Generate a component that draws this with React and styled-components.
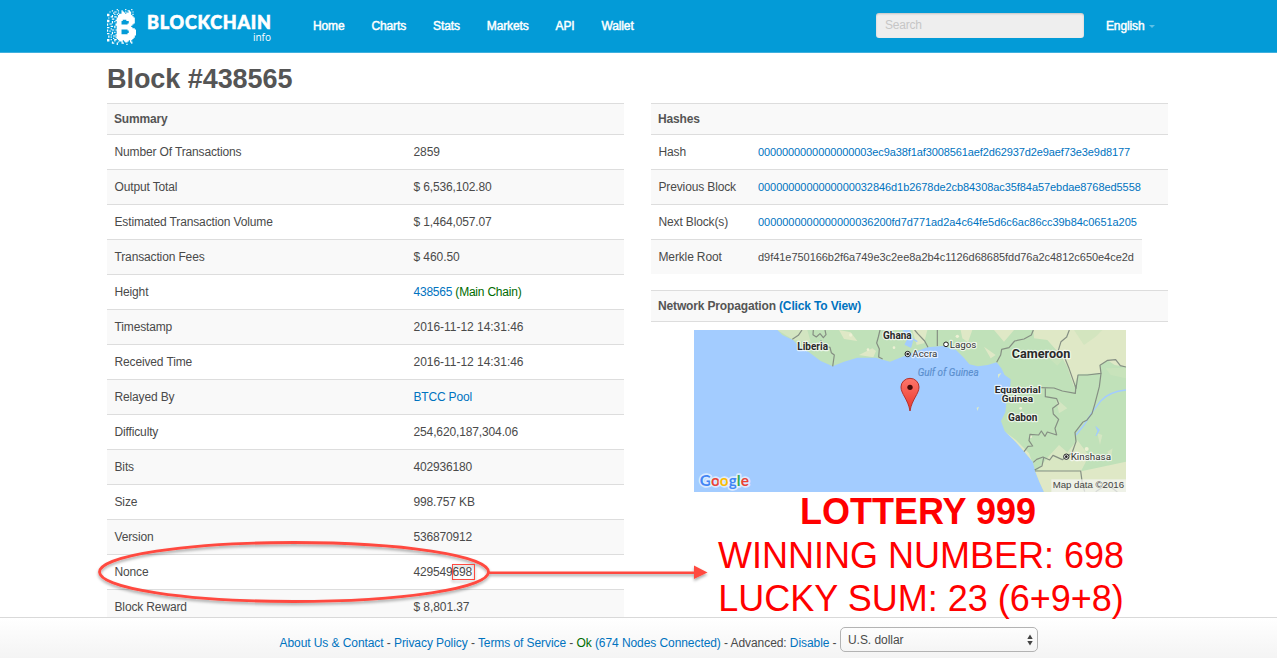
import React from "react";
import styled, { createGlobalStyle } from "styled-components";

const Global = createGlobalStyle`
  *, *::before, *::after { box-sizing: border-box; }
  html, body { margin: 0; padding: 0; }
  body {
    background: #fff;
    color: #4a4a4a;
    font: 12px/18px "Liberation Sans", Arial, sans-serif;
    overflow: hidden;
  }
`;

const Page = styled.div`
  position: relative;
  display: flex;
  flex-direction: column;
  height: 658px;
  overflow: hidden;
`;

const Header = styled.header`
  flex: none;
  height: 53px;
  padding-left: 107px;
  display: flex;
  align-items: flex-start;
  background: #039bd7;
  border-bottom: 1px solid #3fb0de;
`;

const Brand = styled.div`
  display: flex;
  width: 206px;
  padding-top: 9px;
`;

const Mark = styled.svg`
  display: block;
  width: 29px;
  height: 36px;
`;

const Wordmark = styled.div`
  width: 135px;
  padding-top: 4px;
  text-align: right;
  color: #fff;
  font-family: Lato, sans-serif;
`;

const WordTop = styled.div`
  font-size: 18px;
  line-height: 18px;
  font-weight: 900;
  letter-spacing: 0.75px;
  margin-right: -0.7px;
  -webkit-text-stroke: 0.6px #fff;
`;

const WordSub = styled.div`
  font-family: "Open Sans", sans-serif;
  font-size: 10px;
  font-weight: 400;
  line-height: 12px;
`;

const Nav = styled.nav`
  display: flex;
  gap: 27px;
  width: 563px;
  padding-top: 17px;
`;

const NavLink = styled.a`
  color: #fff;
  -webkit-text-stroke: 0.45px #fff;
  letter-spacing: -0.13px;
`;

const Search = styled.div`
  width: 208px;
  height: 25px;
  margin-top: 13px;
  padding: 3px 9px;
  border-radius: 3px;
  background: #eee;
  box-shadow: inset 0 1px 2px rgba(0, 0, 0, 0.18);
  color: #c6c6c6;
  letter-spacing: -0.2px;
`;

const Language = styled.div`
  display: flex;
  align-items: center;
  gap: 5px;
  padding: 17px 0 0 22px;
`;

const Caret = styled.span`
  border: 3px solid transparent;
  border-top-color: #5fc0e6;
  border-bottom: 0;
`;

const Title = styled.h1`
  margin: 0;
  padding: 9px 0 0 107px;
  height: 50px;
  font-size: 27px;
  line-height: 34px;
  color: #555;
  letter-spacing: -0.05px;
`;

const Columns = styled.main`
  display: flex;
  gap: 27px;
  padding-left: 107px;
`;

const Column = styled.section`
  width: 517px;
`;

const Heading = styled.h2`
  margin: 0;
  height: ${(p) => (p.$closed ? 32 : 31)}px;
  padding: 6px 7px 0;
  font-size: 12px;
  line-height: 18px;
  background: #f9f9f9;
  border-top: 1px solid #ddd;
  border-bottom: ${(p) => (p.$closed ? "1px solid #ddd" : "0")};
  margin-top: ${(p) => (p.$closed ? 16 : 0)}px;
  color: #555;
  letter-spacing: -0.15px;
`;

const Row = styled.div`
  display: flex;
  width: ${(p) => p.$width || 517}px;
  height: 35px;
  padding: 8px 0 0 7.5px;
  border-top: 1px solid #ddd;
  background: ${(p) => (p.$shade ? "#f9f9f9" : "#fff")};
`;

const Label = styled.div`
  width: ${(p) => p.$width}px;
  letter-spacing: -0.14px;
`;

const Value = styled.div`
  white-space: nowrap;
  letter-spacing: ${(p) => p.$tracking}px;
`;

const Link = styled.a`
  color: #0073bf;
`;

const Green = styled.span`
  color: #006b00;
`;

const Hash = styled.div`
  font-size: 11px;
  letter-spacing: ${(p) => p.$tracking}px;
  color: ${(p) => (p.$link ? "#0073bf" : "#4a4a4a")};
  white-space: nowrap;
`;

const MapArt = styled.svg`
  display: block;
  width: 432px;
  height: 162px;
  margin: 8px 0 0 43px;
`;

const Result = styled.div`
  position: relative;
  z-index: 2;
  padding-left: 23px;
  margin-top: -2px;
  text-align: center;
  color: #f00;
  font-size: 36px;
  line-height: 43.5px;
  white-space: nowrap;
`;

const ResultTitle = styled.div`
  font-weight: 700;
  padding-right: 6px;
`;

const Footer = styled.footer`
  position: absolute;
  left: 0;
  right: 0;
  bottom: 0;
  height: 41px;
  display: flex;
  gap: 4px;
  padding: 9px 0 0 279.5px;
  border-top: 1px solid #d9d9d9;
  background: linear-gradient(#fff, #f4f4f4);
`;

const FooterLinks = styled.div`
  padding-top: 7px;
  width: 556.5px;
  white-space: nowrap;
  letter-spacing: -0.075px;
`;

const Select = styled.div`
  display: flex;
  justify-content: space-between;
  align-items: center;
  width: 198px;
  height: 25px;
  padding: 0 4px 0 7px;
  border: 1px solid #b3b3b3;
  border-radius: 5px;
  background: linear-gradient(#fdfdfd, #f5f5f5);
  letter-spacing: -0.05px;
`;

const Annotation = styled.svg`
  position: absolute;
  left: 0;
  top: 0;
  z-index: 3;
  pointer-events: none;
`;

const MOSAIC = [
  "........#......#....#...",
  "....#....#..#....##.....",
  "..#...##....##.#..##.#..",
  ".....#...#..###.####....",
  "##....#.#.##########.#..",
  "##..#....############...",
  "...##.##.#############..",
  ".#......###############.",
  "....##..###############.",
  "##.....######...#######.",
  "##..#.#.####......#####.",
  "....#...####......#####.",
  "#.##...#####.....#####..",
  "#......##############...",
  "...##.#.############....",
  "##....#.#############...",
  "...#....###############.",
  "#...##.#####.....#######",
  "#.#.....####......######",
  "....#.#.####......######",
  "##..#...####.....#######",
  "...#...#################",
  ".#...##.###############.",
  ".#.#...################.",
  ".....#..##############..",
  "##.#..##.############...",
  "##....#...###.####.#....",
  "....#....#..#..##..##...",
  "....##..#...##......#...",
  "........#.......#.......",
];

const cells = MOSAIC.flatMap((line, y) =>
  [...line].map((c, x) => (c === "#" ? `M${x} ${y}h1.02v1.02h-1.02z` : "")).filter(Boolean)
).join("");

const summary = [
  ["Number Of Transactions", "2859"],
  ["Output Total", "$ 6,536,102.80", -0.14],
  ["Estimated Transaction Volume", "$ 1,464,057.07", -0.14],
  ["Transaction Fees", "$ 460.50"],
  ["Height", <><Link>438565</Link> <Green>(Main Chain)</Green></>, -0.22],
  ["Timestamp", "2016-11-12 14:31:46", -0.03],
  ["Received Time", "2016-11-12 14:31:46", -0.03],
  ["Relayed By", <Link>BTCC Pool</Link>, -0.18],
  ["Difficulty", "254,620,187,304.06", -0.13],
  ["Bits", "402936180", -0.18],
  ["Size", "998.757 KB", -0.14],
  ["Version", "536870912", -0.18],
  ["Nonce", "429549698", -0.18],
  ["Block Reward", "$ 8,801.37"],
];

const hashes = [
  { label: "Hash", value: "0000000000000000003ec9a38f1af3008561aef2d62937d2e9aef73e3e9d8177", link: true, tracking: -0.105 },
  { label: "Previous Block", value: "0000000000000000032846d1b2678de2cb84308ac35f84a57ebdae8768ed5558", link: true, tracking: -0.07 },
  { label: "Next Block(s)", value: "0000000000000000036200fd7d771ad2a4c64fe5d6c6ac86cc39b84c0651a205", link: true, tracking: -0.045 },
  { label: "Merkle Root", value: "d9f41e750166b2f6a749e3c2ee8a2b4c1126d68685fdd76a2c4812c650e4ce2d", width: 491, tracking: -0.04 },
];

const halo = { stroke: "#fff", strokeWidth: 7, strokeOpacity: 0.7, strokeLinejoin: "round", paintOrder: "stroke" };

function AfricaMap() {
  return (
    <MapArt viewBox="0 15 1296 486">
      <defs>
        <linearGradient id="pin" x1="0" y1="0" x2="0" y2="1">
          <stop offset="0" stopColor="#ff766a" />
          <stop offset="1" stopColor="#e8352b" />
        </linearGradient>
        <clipPath id="land">
          <path d="M250 15L265 30L298 46L318 68L345 82L380 108L416 124L450 110L490 98L545 98L588 110L618 98L660 82L700 67L746 63L786 75L811 100L826 118L851 124L881 120L908 112L922 130L932 150L950 163L948 198L936 208L930 225L937 235L934 262L921 288L932 318L966 352L991 380L1016 410L1024 440L1036 470L1050 501H1296V15Z" />
        </clipPath>
      </defs>
      <rect y="15" width="1296" height="486" fill="#a3ccff" />
      <g clipPath="url(#land)">
        <rect y="15" width="1296" height="486" fill="#c0e1b9" />
        <g fill="#dfe8c6">
          <path d="M1018 15H1296V125L1262 120L1241 106L1218 121L1221 145L1152 148L1140 185L1120 125L1100 90L1060 45L1020 40Z" />
          <path d="M1020 438H1165L1296 410V501H1040Z" />
          <path d="M1060 398L1095 360L1120 382L1150 345L1185 392L1160 440L1030 436Z" opacity=".8" />
          <path d="M926 315L966 345L1005 385L1015 412L990 384L945 345Z" />
          <path d="M250 15H340L350 50L300 46Z" opacity=".6" />
          <path d="M435 15L470 22L490 48L450 42ZM495 90L535 70L546 78L538 97ZM800 15H835L822 52L805 40Z" />
          <path d="M655 15H700L690 55L668 60ZM870 65L905 90L890 100ZM900 15H960L930 50Z" />
          <path d="M1210 325L1225 330L1218 360ZM1240 380L1256 370L1250 402ZM1085 220L1120 250L1095 265Z" opacity=".65" />
        </g>
        <path d="M1140 15L1170 60L1205 35L1225 15ZM1060 95L1105 105L1090 122ZM1235 130L1296 128V160L1250 150Z" fill="#cde3bc" opacity=".65" />
        <g fill="#edf0d4">
          <circle cx="470" cy="30" r="5" /><circle cx="522" cy="74" r="4" /><circle cx="390" cy="68" r="5" />
          <circle cx="600" cy="68" r="4" /><circle cx="845" cy="55" r="4" /><circle cx="790" cy="34" r="5" />
          <circle cx="980" cy="250" r="4" /><circle cx="1010" cy="335" r="4" /><circle cx="1178" cy="372" r="6" />
        </g>
        <path d="M628 15L642 42L634 58L650 66L655 48L646 15ZM653 40L670 50" fill="#a3ccff" stroke="#a3ccff" strokeWidth="4" />
        <path d="M1296 195Q1245 200 1220 228L1194 262L1170 300L1146 330" fill="none" stroke="#a3ccff" strokeWidth="4" />
        <path d="M1206 305L1216 315L1206 332L1212 318Z" fill="#a3ccff" stroke="#a3ccff" strokeWidth="3" />
      </g>
      <path d="M912 148L922 144L912 160ZM848 248L855 245L850 258Z" fill="#dcebc9" />
      <g fill="none" stroke="#858f83" strokeWidth="3.6" strokeLinejoin="round">
        <path d="M324 15L313 31L295 43M358 15L357 29L367 36L378 26L388 38L396 29L393 15M380 46L391 64L408 67L412 83L421 90L416 124" />
        <path d="M558 15L553 36L548 54L556 72L554 96L566 102M662 15L671 26L692 48L702 67M730 15V63" />
        <path d="M908 112L920 90L923 73L945 68L962 48L990 42L1012 30L1018 15M1126 15L1118 36L1101 50L1093 76L1112 98L1125 130L1146 190L1152 150L1180 150L1221 145L1218 121L1241 106L1265 104L1279 122L1296 126" />
        <path d="M1040 188L1080 189L1105 198L1144 205L1146 180M1054 190V215L1088 221L1094 236L1076 250L1078 267L1094 283L1083 310L1088 330L1060 321L1053 334L1042 318L1034 330L1008 328L1005 347L1016 363L1002 364L990 380M1221 145L1216 185L1203 235L1194 266L1178 286L1166 292L1143 322L1146 350L1134 384L1105 404L1077 391L1067 405L1047 396L1028 403L1018 412M1049 398L1044 423L1022 435M1023 438H1160L1165 475L1172 500M1205 500L1240 478L1270 501" />
      </g>
      <path d="M621 186A27 26 0 0 1 675 186C675 207 654 222 648 258C642 222 621 207 621 186Z" fill="url(#pin)" stroke="#b4322c" strokeWidth="3" />
      <circle cx="648" cy="187" r="8" fill="#4b0c0a" />
      <g fontFamily="Roboto, sans-serif" fontWeight="700" fill="#2a2a2a" {...halo}>
        <text x="310" y="74" fontSize="30" textLength="92" lengthAdjust="spacingAndGlyphs">Liberia</text>
        <text x="567" y="41" fontSize="30" textLength="86" lengthAdjust="spacingAndGlyphs">Ghana</text>
        <text x="953" y="98" fontSize="37" textLength="176" lengthAdjust="spacingAndGlyphs">Cameroon</text>
        <text x="902" y="205" fontSize="29" textLength="138" lengthAdjust="spacingAndGlyphs">Equatorial</text>
        <text x="923" y="232" fontSize="29" textLength="94" lengthAdjust="spacingAndGlyphs">Guinea</text>
        <text x="942" y="287" fontSize="30" textLength="88" lengthAdjust="spacingAndGlyphs">Gabon</text>
      </g>
      <g fontFamily="Roboto, sans-serif" fill="#333" {...halo}>
        <text x="655" y="95" fontSize="29" textLength="75" lengthAdjust="spacingAndGlyphs">Accra</text>
        <text x="767" y="68" fontSize="29" textLength="80" lengthAdjust="spacingAndGlyphs">Lagos</text>
        <text x="1130" y="405" fontSize="29" textLength="121" lengthAdjust="spacingAndGlyphs">Kinshasa</text>
      </g>
      <text x="671" y="154" fontSize="30" fontStyle="italic" fontFamily="Roboto, sans-serif" fill="#5b8fce" stroke="#5b8fce" strokeWidth=".5" textLength="183" lengthAdjust="spacingAndGlyphs">Gulf of Guinea</text>
      <g fill="#fff" stroke="#222" strokeWidth="3">
        <circle cx="641" cy="87" r="8" /><circle cx="756" cy="58" r="7" /><circle cx="1117" cy="395" r="8" />
      </g>
      <circle cx="641" cy="87" r="4" fill="#222" /><circle cx="1117" cy="395" r="4" fill="#222" />
      <rect x="1072" y="463" width="224" height="38" fill="#f5f5f5" opacity=".72" />
      <text x="1076" y="489" fontSize="29" fontFamily="Liberation Sans, sans-serif" fill="#444" textLength="214" lengthAdjust="spacingAndGlyphs">Map data ©2016</text>
      <text x="17" y="483" fontSize="46" fontFamily="Lato, sans-serif" fontWeight="700" textLength="148" lengthAdjust="spacingAndGlyphs" stroke="#fff" strokeWidth="10" strokeOpacity=".6" paintOrder="stroke" strokeLinejoin="round">
        <tspan fill="#4285f4">G</tspan><tspan fill="#ea4335">o</tspan><tspan fill="#fbbc05">o</tspan><tspan fill="#4285f4">g</tspan><tspan fill="#34a853">l</tspan><tspan fill="#ea4335">e</tspan>
      </text>
    </MapArt>
  );
}

export default function App() {
  return (
    <Page>
      <Global />
      <Header>
        <Brand>
          <Mark viewBox="0 0 24 30" preserveAspectRatio="none"><path d={cells} fill="#fff" /></Mark>
          <Wordmark>
            <WordTop>BLOCKCHAIN</WordTop>
            <WordSub>info</WordSub>
          </Wordmark>
        </Brand>
        <Nav>
          {["Home", "Charts", "Stats", "Markets", "API", "Wallet"].map((n) => <NavLink key={n}>{n}</NavLink>)}
        </Nav>
        <Search>Search</Search>
        <Language><NavLink>English</NavLink><Caret /></Language>
      </Header>
      <Title>Block #438565</Title>
      <Columns>
        <Column>
          <Heading>Summary</Heading>
          {summary.map(([label, value, tracking = -0.08], i) => (
            <Row key={label} $shade={i % 2 === 1}>
              <Label $width={299}>{label}</Label>
              <Value $tracking={tracking}>{value}</Value>
            </Row>
          ))}
        </Column>
        <Column>
          <Heading>Hashes</Heading>
          {hashes.map((h, i) => (
            <Row key={h.label} $shade={i % 2 === 1} $width={h.width}>
              <Label $width={99.5}>{h.label}</Label>
              <Hash $link={h.link} $tracking={h.tracking}>{h.value}</Hash>
            </Row>
          ))}
          <Heading $closed>Network Propagation <Link>(Click To View)</Link></Heading>
          <AfricaMap />
          <Result>
            <ResultTitle>LOTTERY 999</ResultTitle>
            <div>WINNING NUMBER: 698</div>
            <div>LUCKY SUM: 23 (6+9+8)</div>
          </Result>
        </Column>
      </Columns>
      <Footer>
        <FooterLinks>
          <Link>About Us &amp; Contact</Link> - <Link>Privacy Policy</Link> - <Link>Terms of Service</Link> - <Green>Ok</Green> <Link>(674 Nodes Connected)</Link> - Advanced: <Link>Disable</Link> -
        </FooterLinks>
        <Select>
          U.S. dollar
          <svg width="6" height="12" viewBox="0 0 6 12"><path d="M3 0.5L5.7 5H.3ZM3 11.5L.3 7H5.7Z" fill="#444" /></svg>
        </Select>
      </Footer>
      <Annotation width="1277" height="658">
        <defs>
          <filter id="soft" x="-5%" y="-20%" width="110%" height="150%">
            <feDropShadow dx="0" dy="2" stdDeviation="1.5" floodOpacity=".35" />
          </filter>
        </defs>
        <g fill="none" stroke="#ff4a3f" filter="url(#soft)">
          <ellipse cx="294" cy="572" rx="194.5" ry="29.5" strokeWidth="2.8" />
          <path d="M489 572.7H695" strokeWidth="2.6" />
          <path d="M694 565.5L707.5 572.5L694 579Z" fill="#ff4a3f" stroke="none" />
          <rect x="452.5" y="564.5" width="22" height="15" />
        </g>
      </Annotation>
    </Page>
  );
}
